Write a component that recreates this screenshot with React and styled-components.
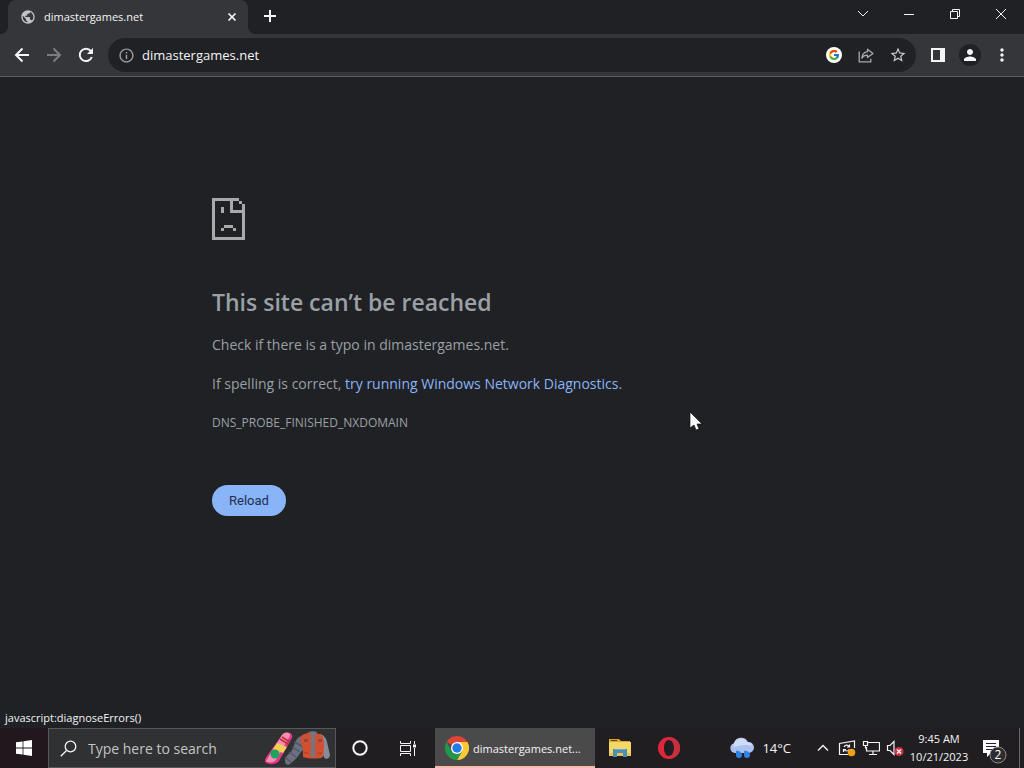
import React from "react";
import styled, { createGlobalStyle } from "styled-components";
import {
  MdInfoOutline,
  MdStarOutline,
  MdPerson,
  MdMoreVert,
  MdPublic,
} from "react-icons/md";
import { FcGoogle } from "react-icons/fc";

const colors = {
  page: "#202124",
  bar: "#35363a",
  line: "#5b5c60",
  text: "#9aa0a6",
  link: "#8ab4f8",
  white: "#f4f5f6",
  taskbar: "#201e21",
};

const GlobalStyle = createGlobalStyle`
  *, *::before, *::after { box-sizing: border-box; }
  body {
    margin: 0;
    background: ${colors.page};
    color: ${colors.white};
    font-family: "Open Sans", "Noto Sans", sans-serif;
  }
  button, input { font: inherit; color: inherit; }
`;

const Desktop = styled.div`
  position: relative;
  min-height: 100vh;
  display: flex;
  flex-direction: column;
`;

/* Tab strip */

const TabStrip = styled.header`
  display: flex;
  height: 34px;
  padding-left: 8px;
  background: ${colors.page};
`;

const Tab = styled.div`
  position: relative;
  display: flex;
  align-items: center;
  gap: 8px;
  flex: 0 1 240px;
  padding: 0 8px 0 12px;
  border-radius: 8px 8px 0 0;
  background: ${colors.bar};

  &::before,
  &::after {
    content: "";
    position: absolute;
    bottom: 0;
    width: 8px;
    height: 8px;
  }
  &::before {
    right: 100%;
    background: radial-gradient(circle at 0 0, transparent 8px, ${colors.bar} 8px);
  }
  &::after {
    left: 100%;
    background: radial-gradient(circle at 100% 0, transparent 8px, ${colors.bar} 8px);
  }
`;

const TabTitle = styled.span`
  flex: 1;
  font-size: 11px;
  line-height: 16px;
`;

const IconButton = styled.button`
  display: flex;
  flex: none;
  align-items: center;
  justify-content: center;
  width: ${(p) => p.$width || 32}px;
  height: ${(p) => p.$height || 32}px;
  padding: 0;
  border: 0;
  background: none;
  color: ${(p) => p.$color || colors.white};
`;

const NewTab = styled(IconButton)`
  margin-left: 6px;
`;

const WindowControls = styled.div`
  display: flex;
  margin-left: auto;
  height: 28px;
`;

/* Toolbar */

const Toolbar = styled.nav`
  display: flex;
  align-items: center;
  height: 43px;
  padding: 0 6px;
  border-bottom: 1px solid ${colors.line};
  background: ${colors.bar};
`;

const AddressBar = styled.form`
  display: flex;
  flex: 1;
  align-items: center;
  height: 34px;
  margin: 0 6px;
  padding: 0 2px;
  border-radius: 17px;
  background: ${colors.page};
`;

const AddressInput = styled.input`
  flex: 1;
  min-width: 0;
  height: 24px;
  padding: 0;
  border: 0;
  outline: 0;
  background: none;
  font-size: 13px;
`;

const Avatar = styled.span`
  display: flex;
  align-items: center;
  justify-content: center;
  width: 22px;
  height: 22px;
  border-radius: 50%;
  background: ${colors.page};
`;

/* Error page */

const Page = styled.main`
  display: flex;
  flex: 1;
  flex-direction: column;
`;

const ErrorBox = styled.section`
  width: 100%;
  max-width: 600px;
  margin: 0 auto;
  padding: 121px 0 24px;
  color: ${colors.text};
`;

const SadPage = styled.svg`
  display: block;
  width: 33px;
  height: 42px;
  fill: #a8a9ab;
`;

const Title = styled.h1`
  margin: 46px 0 0;
  font-size: 23px;
  line-height: 32px;
  font-weight: 600;
`;

const Message = styled.p`
  margin: 15px 0 0;
  font-size: 14px;
  line-height: 24px;
`;

const ErrorCode = styled.p`
  margin: 15px 0 0;
  font-size: 12px;
  line-height: 24px;
`;

const Link = styled.a`
  color: ${colors.link};
  text-decoration: none;
`;

const Reload = styled.button`
  margin-top: 50px;
  height: 31px;
  padding: 0 17px;
  border: 0;
  border-radius: 16px;
  background: ${colors.link};
  color: #202f4e;
  font-family: Roboto, sans-serif;
  font-size: 13px;
`;

const StatusText = styled.output`
  margin-top: auto;
  padding: 0 5px 2px;
  font-size: 11px;
  line-height: 16px;
`;

const Pointer = styled.svg`
  position: absolute;
  left: 689px;
  top: 411px;
  width: 13px;
  height: 20px;
  pointer-events: none;
`;

/* Taskbar */

const Taskbar = styled.footer`
  display: flex;
  height: 40px;
  background: ${colors.taskbar};
`;

const StartButton = styled(IconButton)`
  background: #20181c;
`;

const SearchBox = styled.label`
  display: flex;
  flex: 0 1 288px;
  align-items: center;
  min-width: 0;
  padding: 0 4px 0 11px;
  border: 1px solid #58585a;
  background: #303132;
`;

const SearchInput = styled.input`
  flex: 1;
  min-width: 0;
  padding: 0;
  margin-left: 11px;
  border: 0;
  outline: 0;
  background: none;
  font-size: 14px;

  &::placeholder {
    color: #c4c4c5;
    opacity: 1;
  }
`;

const TaskButton = styled.button`
  display: flex;
  flex: 0 1 160px;
  align-items: center;
  gap: 4px;
  min-width: 0;
  margin-left: 3px;
  padding: 2px 8px 0 10px;
  border: 0;
  border-bottom: 2px solid #f5bda9;
  background: #4b4a4b;
  font-size: 11px;
  white-space: nowrap;
`;

const Tray = styled.div`
  display: flex;
  align-items: center;
  margin-left: auto;
`;

const Weather = styled.button`
  display: flex;
  align-items: center;
  gap: 7px;
  height: 40px;
  padding: 0;
  margin-right: 20px;
  border: 0;
  background: none;
  font-size: 13px;
`;

const Clock = styled.time`
  width: 64px;
  font-size: 11px;
  line-height: 18px;
  text-align: center;
  white-space: nowrap;
`;

const ShowDesktop = styled.button`
  width: 5px;
  height: 40px;
  padding: 0;
  border: 0;
  border-left: 1px solid #6a6a6b;
  background: none;
`;

function LineIcon({ size = 16, width = 1, children }) {
  return (
    <svg
      width={size}
      height={size}
      viewBox={`0 0 ${size} ${size}`}
      fill="none"
      stroke="currentColor"
      strokeWidth={width}
      aria-hidden="true"
    >
      {children}
    </svg>
  );
}

function ReloadIcon() {
  return (
    <LineIcon size={16} width={2}>
      <path d="M13.8 10A6.200 6.200 0 1 1 12.800 4" />
      <path d="M15 1v6H9z" fill="currentColor" stroke="none" />
    </LineIcon>
  );
}

function ShareIcon() {
  return (
    <LineIcon size={16} width={1.3}>
      <path d="M1.2 4.5v10.3h11.6v-3" />
      <path d="M9.5 2.2 15 6.4l-5.5 4.2V8.2C6.8 8.1 5 9 3.8 11.2c.3-3.8 2.3-6 5.7-6.5z" strokeLinejoin="round" />
    </LineIcon>
  );
}

function WindowsLogo() {
  return (
    <svg width="16" height="16" viewBox="0 0 16 16" fill="#fff" aria-hidden="true">
      <path d="M0 2.3 6.6 1.4v6.2H0zM7.4 1.2 16 0v7.6H7.4zM0 8.4h6.6v6.2L0 13.7zM7.4 8.4H16V16l-8.6-1.2z" />
    </svg>
  );
}

function SearchArt() {
  return (
    <svg width="66" height="38" viewBox="0 0 66 38" aria-hidden="true">
      <path d="M17 6c3-4 12-3 10 3L14 32c-3 4-11 4-14 1-1-2 1-4 2-6z" fill="#e2368c" />
      <path d="M17 6c3-4 9-3 8 1L11 31c-2 3-8 3-10 1z" fill="#f58fae" />
      <path d="m12 14 10 4-4 6-10-4z" fill="#f2cf55" />
      <path d="m17 8 8 5M15 10l8 5" stroke="#b9303f" strokeWidth="1.6" />
      <circle cx="10" cy="25" r="4.5" fill="#1fa35b" />
      <path d="M37 7c-6 1-7 7-9 12-2 6-8 7-8 13 0 4 4 5 6 2 6-4 7-8 12-13z" fill="#6b7080" />
      <path d="m29 13 8 4M27 18l8 5M24 23l7 5M20 28l6 5" stroke="#505563" strokeWidth="1.4" />
      <path d="M55 5c4 1 6 4 7 8l3 13c0 4-5 5-6 2l-5-12z" fill="#878b9c" />
      <path d="M37 6c4-1 6-3 9-3 4 0 5 1 11 3 3 5 2 15 1 22-3 2-13 2-20 0V18c-3-4-3-8-1-12z" fill="#d2502f" />
      <path d="M44 3c2-1 5-1 8 0l-2 4v21h-4V7z" fill="#737685" />
      <path d="M39 10h4v3h-4zM53 10h4v3h-4z" fill="#8d4a40" />
      <path d="M39 24h4M53 24h4" stroke="#a33c28" />
    </svg>
  );
}

function ChromeLogo() {
  return (
    <svg width="24" height="24" viewBox="0 0 24 24" aria-hidden="true">
      <path d="M12 12 1.6 6A12 12 0 0 1 22.4 6z" fill="#dc4436" />
      <path d="M22.4 6A12 12 0 0 1 12 24l5.2-9L12 6z" fill="#fbc934" />
      <path d="M1.6 6A12 12 0 0 0 12 24l5.2-9H6.8z" fill="#26954c" />
      <path d="M12 6h10.4L12 12z" fill="#dc4436" />
      <path d="M22.4 6H12l5.2 9z" fill="#fbc934" />
      <circle cx="12" cy="12" r="6" fill="#fff" />
      <circle cx="12" cy="12" r="4.7" fill="#2879e8" />
    </svg>
  );
}

function FolderIcon() {
  return (
    <svg width="22" height="18" viewBox="0 0 22 18" aria-hidden="true">
      <path d="M0 0h10l2 2h9v3H0z" fill="#dba52e" />
      <path d="M2 1h6v1H2z" fill="#5a4520" />
      <path d="M0 3h22v14H0z" fill="#f5d766" />
      <path d="M0 14h22v3H0z" fill="#ecc453" />
      <path d="M4 10h14v8h-4v-4H8v4H4z" fill="#4a90bd" />
      <path d="M6 10h10v1H6z" fill="#65aad5" />
    </svg>
  );
}

function OperaLogo() {
  return (
    <svg width="22" height="22" viewBox="0 0 22 22" aria-hidden="true">
      <path
        fill="#df273b"
        fillRule="evenodd"
        d="M11 0a11 11 0 1 0 0 22 11 11 0 0 0 0-22zm0 3c3 0 5 3.5 5 8s-2 8-5 8-5-3.5-5-8 2-8 5-8z"
      />
      <path d="M11 3c4-3 11 0 11 8s-7 11-11 8c3 0 5-3.5 5-8s-2-8-5-8z" fill="#c5303f" />
    </svg>
  );
}

function WeatherIcon() {
  return (
    <svg width="26" height="22" viewBox="0 0 26 22" aria-hidden="true">
      <path d="M6 16a5 5 0 0 1-1-9.8A7.5 7.5 0 0 1 19 5a5.5 5.5 0 0 1 1 11z" fill="#a9c3ee" />
      <path d="M5 10a7 7 0 0 1 13-5 5 5 0 0 1 5 4c-6-2-11-1-18 1z" fill="#cfdcf5" />
      <path
        d="M7 14c2-1 6 1 6 4a3 3 0 0 1-6 0zM15 14c2-1 6 1 6 4a3 3 0 0 1-6 0z"
        fill="#2f83e6"
      />
    </svg>
  );
}

function UpdateIcon() {
  return (
    <LineIcon size={18} width={1.2}>
      <path d="M10 15.500H1.500V4.500L16.500 2v7" />
      <path d="M6 8c1-2.500 4-2.500 5-.5M11.500 5.500v2.500H9M11 10.500c-1 2-4 2-5 0M5.500 13v-2.500H8" />
      <circle cx="13.500" cy="13.500" r="3.800" fill="#f3a117" stroke="none" />
    </LineIcon>
  );
}

function NetworkIcon() {
  return (
    <LineIcon size={18} width={1.2}>
      <path d="M6 3.500h11.500v8.500H4.500V8M11 12v3.500M7 15.500h8" />
      <path d="M1.500 2.500h4v4h-4zM3.500 6.500v3" />
    </LineIcon>
  );
}

function MutedIcon() {
  return (
    <LineIcon size={18} width={1.2}>
      <path d="M1.500 6.500h2.500l4-4v13l-4-4H1.500z" />
      <circle cx="13" cy="12.500" r="4.500" fill="#cf3440" stroke="none" />
      <path d="m11 10.500 4 4m0-4-4 4" stroke="#fff" />
    </LineIcon>
  );
}

function ActionCenterIcon() {
  return (
    <svg width="26" height="32" viewBox="0 0 26 32" aria-hidden="true">
      <path d="M1 8h16v13H9l-4 4v-4H1z" fill="#fff" />
      <path d="M4 11.500h10M4 14.500h10M4 17.500h7" stroke="#242225" />
      <circle cx="16" cy="23" r="8" fill="#2d2c2f" stroke="#8b8b8d" />
      <text x="16" y="27" textAnchor="middle" fontSize="12" fill="#fff">2</text>
    </svg>
  );
}

export default function App() {
  return (
    <Desktop>
      <GlobalStyle />
      <TabStrip>
        <Tab>
          <MdPublic size={16} color="#c1c3c6" />
          <TabTitle>dimastergames.net</TabTitle>
          <IconButton $width={16} $height={16} aria-label="Close tab">
            <LineIcon size={10} width={1.7}><path d="m1.500 1.500 7 7m0-7-7 7" /></LineIcon>
          </IconButton>
        </Tab>
        <NewTab aria-label="New tab">
          <LineIcon size={12} width={2}><path d="M6 0v12M0 6h12" /></LineIcon>
        </NewTab>
        <WindowControls>
          <IconButton $width={46} $height={28} aria-label="Search tabs">
            <LineIcon size={12}><path d="m1 3 5 5 5-5" /></LineIcon>
          </IconButton>
          <IconButton $width={46} $height={28} aria-label="Minimize">
            <LineIcon size={10}><path d="M0 5.500h10" /></LineIcon>
          </IconButton>
          <IconButton $width={46} $height={28} aria-label="Restore">
            <LineIcon size={10}><path d="M.5 2.500h7v7h-7zM2.500 2.500v-2h7v7h-2" /></LineIcon>
          </IconButton>
          <IconButton $width={46} $height={28} aria-label="Close window">
            <LineIcon size={12}><path d="m1 1 10 10m0-10L1 11" /></LineIcon>
          </IconButton>
        </WindowControls>
      </TabStrip>

      <Toolbar>
        <IconButton aria-label="Back">
          <LineIcon size={16} width={2}><path d="M15 8H2.500M8.500 1.500 2 8l6.500 6.500" /></LineIcon>
        </IconButton>
        <IconButton aria-label="Forward" $color="#7d7e82">
          <LineIcon size={16} width={2}><path d="M1 8h12.500M7.500 1.500 14 8l-6.500 6.500" /></LineIcon>
        </IconButton>
        <IconButton aria-label="Refresh"><ReloadIcon /></IconButton>
        <AddressBar>
          <IconButton type="button" aria-label="Site information" $color="#9a9da1">
            <MdInfoOutline size={17} />
          </IconButton>
          <AddressInput aria-label="Address" defaultValue="dimastergames.net" />
          <IconButton type="button" aria-label="Search with Google">
            <svg width="16" height="16" viewBox="0 0 16 16" aria-hidden="true">
              <circle cx="8" cy="8" r="8" fill="#fff" />
              <FcGoogle x="2" y="2" size={12} />
            </svg>
          </IconButton>
          <IconButton type="button" aria-label="Share" $color="#a5a7aa"><ShareIcon /></IconButton>
          <IconButton type="button" aria-label="Bookmark" $color="#c7c9cc"><MdStarOutline size={18} /></IconButton>
        </AddressBar>
        <IconButton aria-label="Side panel">
          <svg width="14" height="14" viewBox="0 0 14 14" aria-hidden="true">
            <path d="M0 0h14v14H0zM2 2v10h7V2z" fill="currentColor" fillRule="evenodd" />
          </svg>
        </IconButton>
        <IconButton aria-label="Profile"><Avatar><MdPerson size={18} /></Avatar></IconButton>
        <IconButton aria-label="Menu"><MdMoreVert size={20} /></IconButton>
      </Toolbar>

      <Page>
        <ErrorBox>
          <SadPage viewBox="0 0 11 14" shapeRendering="crispEdges" aria-hidden="true">
            <path d="M0 0h9v1h1v1h1v12H0zM1 1v12h9V5H6V1zM7 1v3h3V2H9V1z" fillRule="evenodd" />
            <path d="M3 3h1v2H3zM4 9h3v1H4zM3 10h1v1H3zM7 10h1v1H7z" />
          </SadPage>
          <Title>This site can’t be reached</Title>
          <Message>Check if there is a typo in dimastergames.net.</Message>
          <Message>
            If spelling is correct, <Link href="#diagnose">try running Windows Network Diagnostics</Link>.
          </Message>
          <ErrorCode>DNS_PROBE_FINISHED_NXDOMAIN</ErrorCode>
          <Reload>Reload</Reload>
        </ErrorBox>
        <StatusText>javascript:diagnoseErrors()</StatusText>
      </Page>

      <Taskbar>
        <StartButton $width={48} $height={40} aria-label="Start"><WindowsLogo /></StartButton>
        <SearchBox>
          <LineIcon size={17} width={1.3}>
            <circle cx="10.500" cy="6.500" r="5.300" />
            <path d="M6.500 10.500.8 16.200" />
          </LineIcon>
          <SearchInput placeholder="Type here to search" aria-label="Type here to search" />
          <SearchArt />
        </SearchBox>
        <IconButton $width={48} $height={40} aria-label="Cortana">
          <LineIcon size={16} width={2}><circle cx="8" cy="8" r="6.700" /></LineIcon>
        </IconButton>
        <IconButton $width={48} $height={40} aria-label="Task view">
          <LineIcon size={16}>
            <path d="M.5 1v2.500h10V1M.5 5.500h10v6H.5zM.5 16v-2.500h10V16M14.500 1v3M14.500 8v8" />
            <path d="M13 4.500h3v3h-3z" fill="currentColor" stroke="none" />
          </LineIcon>
        </IconButton>
        <TaskButton><ChromeLogo />dimastergames.net...</TaskButton>
        <IconButton $width={49} $height={40} aria-label="File Explorer"><FolderIcon /></IconButton>
        <IconButton $width={49} $height={40} aria-label="Opera"><OperaLogo /></IconButton>
        <Tray>
          <Weather><WeatherIcon />14°C</Weather>
          <IconButton $width={24} $height={40} aria-label="Show hidden icons">
            <LineIcon size={12} width={1.3}><path d="m1 8.500 5-5 5 5" /></LineIcon>
          </IconButton>
          <IconButton $width={24} $height={40} aria-label="Updates"><UpdateIcon /></IconButton>
          <IconButton $width={24} $height={40} aria-label="Network"><NetworkIcon /></IconButton>
          <IconButton $width={24} $height={40} aria-label="Volume"><MutedIcon /></IconButton>
          <Clock dateTime="2023-10-21T09:45">9:45 AM<br />10/21/2023</Clock>
          <IconButton $width={48} $height={40} aria-label="Notifications"><ActionCenterIcon /></IconButton>
          <ShowDesktop aria-label="Show desktop" />
        </Tray>
      </Taskbar>

      <Pointer viewBox="0 0 13 20" aria-hidden="true">
        <path d="M1 1v16l4-3 2 5 3-1-2-5h5z" fill="#fff" stroke="#111" strokeWidth=".7" />
      </Pointer>
    </Desktop>
  );
}
